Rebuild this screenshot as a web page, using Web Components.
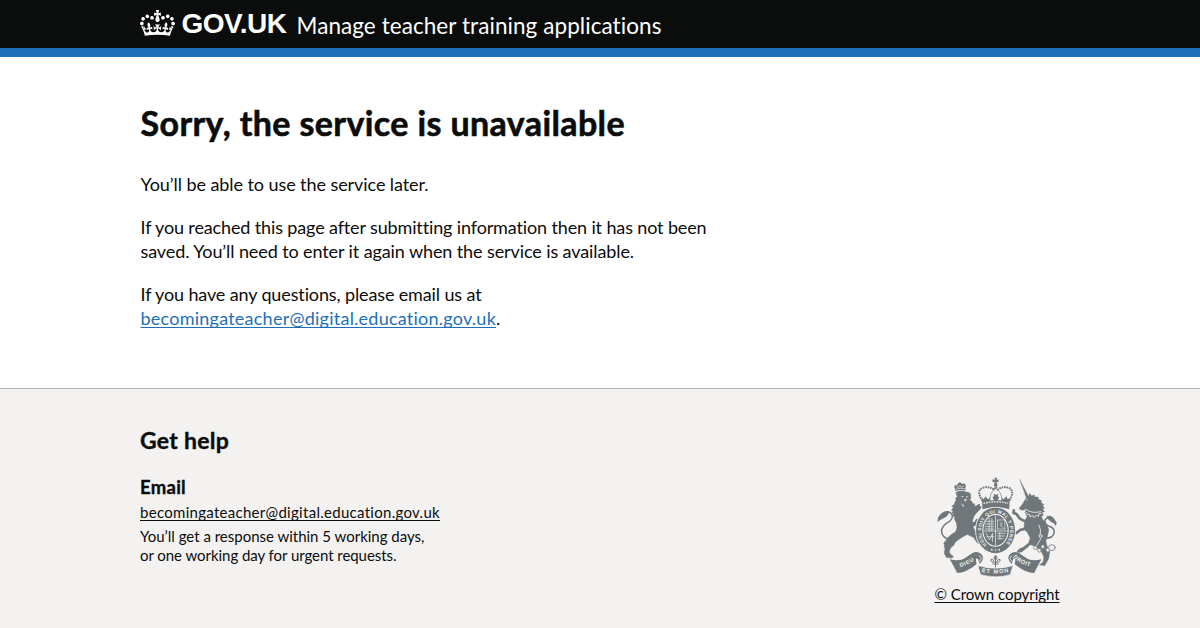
<!DOCTYPE html>
<html lang="en">
<head>
<meta charset="utf-8">
<title>Sorry, the service is unavailable</title>
<style>body{margin:0;background:#fff}</style>
</head>
<body>
<service-page></service-page>
<script>
const define = (name, html, ready) => customElements.define(name, class extends HTMLElement {
  connectedCallback() {
    if (this.shadowRoot) return;
    const t = document.createElement('template');
    t.innerHTML = html;
    this.attachShadow({ mode: 'open' }).append(t.content.cloneNode(true));
    if (ready) ready(this);
  }
});

/* One unbroken line of text, tracked so that it fills the measure given in "width". */
define('text-line', `<style>
:host{display:block;white-space:nowrap;width:max-content;font-variant-ligatures:none}
</style><slot></slot>`, el => {
  const want = parseFloat(el.getAttribute('width'));
  const n = el.textContent.trim().length;
  el.style.letterSpacing = ((want - el.getBoundingClientRect().width) / n).toFixed(4) + 'px';
});

define('crown-logo', `<style>:host{display:block;width:35px;height:26px}svg{display:block}</style>
<svg width="35" height="26" viewBox="0 0 132 97" preserveAspectRatio="none" fill="#fff"><path d="M25 30.2c3.5 1.5 7.7-.2 9.1-3.7 1.5-3.6-.2-7.8-3.9-9.2-3.6-1.4-7.6.3-9.1 3.9-1.4 3.5.3 7.5 3.9 9zM9 39.5c3.6 1.5 7.8-.2 9.2-3.7 1.5-3.6-.2-7.8-3.9-9.1-3.6-1.5-7.6.2-9.1 3.8-1.4 3.5.3 7.5 3.8 9zM4.4 57.2c3.5 1.5 7.7-.2 9.1-3.8 1.5-3.6-.2-7.7-3.9-9.1-3.5-1.5-7.6.3-9.1 3.8-1.4 3.5.3 7.6 3.9 9.1zm38.3-21.4c3.5 1.5 7.7-.2 9.1-3.8 1.5-3.6-.2-7.7-3.9-9.1-3.6-1.5-7.6.3-9.1 3.8-1.3 3.6.4 7.7 3.9 9.1zm64.4-5.6c-3.6 1.5-7.8-.2-9.1-3.7-1.5-3.6.2-7.8 3.8-9.2 3.6-1.4 7.7.3 9.2 3.9 1.3 3.5-.4 7.5-3.9 9zm15.9 9.3c-3.6 1.5-7.7-.2-9.1-3.7-1.5-3.6.2-7.8 3.7-9.1 3.6-1.5 7.7.2 9.2 3.8 1.5 3.5-.3 7.5-3.8 9zm4.7 17.7c-3.6 1.5-7.8-.2-9.2-3.8-1.5-3.6.2-7.7 3.9-9.1 3.6-1.5 7.7.3 9.2 3.8 1.3 3.5-.4 7.6-3.9 9.1zM89.3 35.8c-3.6 1.5-7.8-.2-9.2-3.8-1.4-3.6.2-7.7 3.9-9.1 3.6-1.5 7.7.3 9.2 3.8 1.4 3.6-.3 7.7-3.9 9.1zM69.7 17.7l8.9 4.7V9.3l-8.9 2.8c-.2-.3-.5-.6-.9-.9L72.4 0H59.6l3.5 11.2c-.3.3-.6.5-.9.9l-8.8-2.8v13.1l8.8-4.7c.3.3.6.7.9.9l-5 15.4v.1c-.2.8-.4 1.6-.4 2.4 0 4.1 3.1 7.5 7 8.1h.2c.3 0 .7.1 1 .1.4 0 .7 0 1-.1h.2c4-.6 7.1-4.1 7.1-8.1 0-.8-.1-1.7-.4-2.4V34l-5.1-15.4c.4-.2.7-.6 1-.9zM66 92.8c16.9 0 32.8 1.1 47.1 3.2 4-16.9 8.9-26.7 14-33.5l-9.6-3.4c1 4.9 1.1 7.2 0 10.2-1.5-1.4-3-4.3-4.2-8.7L108.6 76c2.8-2 5-3.2 7.5-3.3-4.4 9.4-10 11.9-13.6 11.2-4.3-.8-6.3-4.6-5.6-7.9 1-4.7 5.7-5.9 8-.5 4.3-8.7-3-11.4-7.6-8.8 7.1-7.2 7.9-13.5 2.1-21.1-8 6.1-8.1 12.3-4.5 20.8-4.7-5.4-12.1-2.5-9.5 6.2 3.4-5.2 7.9-2 7.2 3.1-.6 4.3-6.4 7.8-13.5 7.2-10.3-.9-10.9-8-11.2-13.8 2.5-.5 7.1 1.8 11 7.3L80.2 60c-4.1 4.4-8 5.3-12.3 5.4 1.4-4.4 8-11.6 8-11.6H55.5s6.4 7.2 7.9 11.6c-4.2-.1-8-1-12.3-5.4l1.4 16.4c3.9-5.5 8.5-7.7 10.9-7.3-.3 5.8-.9 12.8-11.1 13.8-7.2.6-12.9-2.9-13.5-7.2-.7-5 3.8-8.3 7.1-3.1 2.7-8.7-4.6-11.6-9.4-6.2 3.7-8.5 3.6-14.7-4.6-20.8-5.8 7.6-5 13.9 2.2 21.1-4.7-2.6-11.9.1-7.7 8.8 2.3-5.5 7.1-4.2 8.1.5.7 3.3-1.3 7.1-5.7 7.9-3.5.7-9-1.8-13.5-11.2 2.5.1 4.7 1.3 7.5 3.3l-4.7-15.4c-1.2 4.4-2.7 7.2-4.3 8.7-1.1-3-.9-5.3 0-10.2l-9.5 3.4c5 6.9 9.9 16.7 14 33.5 14.8-2.1 30.8-3.2 47.7-3.2z"/></svg>`);

define('royal-arms', `<style>:host{display:block;width:125px;height:102px}svg{display:block;overflow:visible}text{font:700 17px "Liberation Sans",sans-serif;fill:#f3f2f1}</style>
<svg width="125" height="102" viewBox="28.5 21 375 306" fill="#6f777b" stroke-linecap="round" stroke-linejoin="round">
<defs><path id="motto" d="M184 225A43.500 53.500 0 1 1 237 225"/><path id="l" d="M104 291Q132 285 156 262"/><path id="m" d="M168 306Q210 315 256 305"/><path id="r" d="M263 262Q284 284 326 292"/></defs>
<!-- lion -->
<path d="M91 63l-5-13 4-6 4 3 4-8 6-2 6 5 6-2 5 6-2 16q-14-4-28 1z"/>
<path d="M93 57q11-4 24-1M94 49l4 4 5-7 5 6 6-4" fill="none" stroke="#f3f2f1" stroke-width="2"/>
<path d="M92 67q14-7 28-1l11 2 5 6-2 5 3 5-5 4 8 8 2 7 5-2 0 8 7-1-1 7 6 1-4 10-9 11q-6 11-6 22 1 14 8 22 11 9 14 22l8 10-1 10-13-4-12-17-19-9q-16 8-29 18-11 7-10 13l-9 8q-10 12-3 20l10 8-6 4-15-2-6-11 2-22-4-9 15-20q10-9 20-14 8-12 3-27-8-10-5-22l-6 2 3-9-6 0 5-9-6 0 6-9-5-4 7-4q3-5 3-10l4-3-3-6 5-4z" stroke="#6f777b" stroke-width="2"/>
<path d="M107 79l8-1-4 4zM122 79l7 1-6 3zM116 87l8 1-5 8zM107 100l9 7-3 3z" fill="#f3f2f1"/>
<path d="M135 122l13-6 7-12 8-3 0 7 6 2-6 10-12 10-14 7zM130 160l17-5 5-9 8 2-2 12-9 8-17 5z"/>
<path d="M75 209q-27-6-27-27 3-15 18-24 17-9 14-23-4-10-16-10" fill="none" stroke="#6f777b" stroke-width="4.500"/>
<path d="M36 156q-1-16 13-27 12-9 22-4-3 13-14 18-13 6-21 13zM62 230l-8 3 3-7z"/>
<!-- unicorn -->
<path d="M283 29l27 52-7 3z" stroke="#6f777b"/>
<path d="M302 84l8-7 2-7 6 7 9-2 0 5 12 2-1 5 11 5-3 5 10 7-5 3 7 8-7 1 6 9-7 2 4 9-6 1q0 9 9 17 8 10 13 25l-4 20-5 13 3 14 9 20-3 19-12 22-16-2 11-10 2-14-8-17-13-13-19-7-8 7-17 14-10 3-6-4 8-8 12-5 15-12 5-14-8-17-10-10 0-15 3-14 6-9-4-8-2-4 2-10-10 3-9-3 0-5 9-11z" stroke="#6f777b"/>
<path d="M302 89l6-1-4 4z" fill="#f3f2f1"/>
<path d="M301 118q17 14 45 7M302 127l4 7 6-1 2 8 7-5 5 7 5-7 8 3 1-8 7-1" fill="none" stroke="#f3f2f1" stroke-width="2.500"/>
<path d="M304 157l-22-12-9-13-9-3 1-8M300 176l-16 4-11 9-8-2" fill="none" stroke="#6f777b" stroke-width="8"/>
<path d="M350 205q34 2 36-18 1-13-15-18-16-7-12-20 7-9 19-2 12 8 12 17" fill="none" stroke="#6f777b" stroke-width="4.500"/>
<path d="M362 140q15-8 25 8 6 9 7 14-21-4-32-22z"/>
<path d="M340 165q9 16 4 30M346 206l-12 20" fill="none" stroke="#f3f2f1" stroke-width="2.500"/><circle cx="345" cy="198" r="4.500" fill="none" stroke="#f3f2f1" stroke-width="2.500"/>
<g fill="#f3f2f1" stroke="#6f777b" stroke-width="2.400"><circle cx="330" cy="233" r="5.500"/><circle cx="342" cy="241" r="5.500"/><circle cx="352" cy="230" r="5.500"/><circle cx="367" cy="240" r="6"/><ellipse cx="379" cy="233" rx="10" ry="9"/></g>
<!-- crown -->
<path d="M207 23h8l-2 7 6-2v9l-6-2 3 12q-6 6-11 0l3-12-7 2v-9l7 2z"/>
<g fill="none" stroke="#6f777b"><path d="M171 92q-19-28-2-37 18-9 36 4l6-8 6 8q18-13 36-4 15 11-2 37" stroke-width="6" stroke-dasharray="5 2.500" stroke-linecap="butt"/><path d="M193 90q0-21 13-31M229 90q0-21-13-31" stroke-width="2"/></g>
<path d="M171 118l-2-35 6 5 5-9 7 9 7-5-2 8h13l-4-9 5-4-3-7 8 3 8-3-3 7 5 4-4 9h13l-2-8 7 5 7-9 5 9 6-5-2 35q-37-12-80 0z"/>
<path d="M174 100q37-9 74 0" fill="none" stroke="#f3f2f1" stroke-width="4" stroke-dasharray="5 3" stroke-linecap="butt"/>
<!-- garter and shield -->
<ellipse cx="210" cy="181" rx="61" ry="71" fill="#f3f2f1"/>
<ellipse cx="210" cy="181" rx="49" ry="59" fill="none" stroke="#6f777b" stroke-width="19"/>
<ellipse cx="210" cy="181" rx="36.500" ry="46"/>
<g fill="none" stroke="#f3f2f1" stroke-width="2"><path d="M210 137v88M175 183h70M182 154h23M179 162h26M179 170h26M179 177h26"/><path d="M216 150v27M238 152v25M216 150h22M216 177h22M223 157l8 4-8 5 9 5M191 145v38M199 145v38" stroke-width="1.800"/><path d="M182 190l10 20 9-20 0 24M184 200h20M216 190h23M216 198h21M216 206h17M223 187v20"/></g>
<text style="font-size:14px" textLength="240"><textPath href="#motto">HONI SOIT QUI MAL Y PENSE</textPath></text>
<g fill="#f3f2f1"><circle cx="199" cy="239" r="2.500"/><circle cx="210" cy="240" r="2.500"/><circle cx="221" cy="239" r="2.500"/></g>
<!-- ribbon and floral badge -->
<path d="M73 268q25 7 42-2 13-8 26-17 14-7 26 3 9 9 3 20l-7 10-4-8q2-10-8-8l2 17q-32 26-58 26-9-18-22-41zM348 268q-25 7-42-2-13-8-26-17-14-7-26 3-9 9-3 20l7 10 4-8q-2-10 8-8l-2 17q32 26 58 26 9-18 22-41z"/>
<path d="M158 287q52 16 104 0l-8 27q-44 12-88 0z" stroke="#f3f2f1" stroke-width="1.500"/>
<path d="M162 257l6 8-6 10M259 257l-6 8 6 10" fill="none" stroke="#f3f2f1" stroke-width="2.500"/>
<path d="M210 291v-33M208 276q-12 4-12-7 5-5 10 5M212 276q12 4 12-7-5-5-10 5M210 256q-9 9 0 15 9-6 0-15M202 282h16" fill="none" stroke="#6f777b" stroke-width="3"/>
<text textLength="47"><textPath href="#l">DIEU</textPath></text>
<text textLength="82"><textPath href="#m">ET MON</textPath></text>
<text textLength="58"><textPath href="#r">DROIT</textPath></text>
</svg>`);

define('page-width', `<style>:host{display:block;width:920px;margin:0 auto}</style><slot></slot>`);

define('service-header', `<style>
:host{display:block;height:48px;background:#0b0c0c;border-bottom:9px solid #1d70b8;color:#fff}
div{display:flex;align-items:flex-start;padding-top:10px}
.gov{font:700 28px/28px "Liberation Sans",Arial,sans-serif;margin-left:6.5px}
.name{font-size:22.5px;line-height:28px;margin:2px 0 0 10px}
</style><page-width><div><crown-logo></crown-logo><text-line class="gov" width="105">GOV.UK</text-line><text-line class="name" width="365">Manage teacher training applications</text-line></div></page-width>`);

define('service-main', `<style>
:host{display:block;height:331px}
section{padding:46px 0 0 .5px;font-size:18px;line-height:24px}
h1{font-size:34px;line-height:40px;margin:0 0 29px;font-weight:700;-webkit-text-stroke:.6px}
p{margin:0 0 19px}
a{color:#1d70b8;text-decoration:underline;text-decoration-thickness:1px;text-underline-offset:2px;text-decoration-skip-ink:none}
</style><page-width><section>
<h1><text-line width="484.5">Sorry, the service is unavailable</text-line></h1>
<p><text-line width="288">You’ll be able to use the service later.</text-line></p>
<p><text-line width="566">If you reached this page after submitting information then it has not been</text-line><text-line width="493.5">saved. You’ll need to enter it again when the service is available.</text-line></p>
<p><text-line width="341">If you have any questions, please email us at</text-line><text-line width="360"><a href="#">becomingateacher@digital.education.gov.uk</a>.</text-line></p>
</section></page-width>`);

define('service-footer', `<style>
:host{display:block;height:239px;background:#f3f2f1;border-top:1px solid #b1b4b6}
.row{display:flex;justify-content:space-between;align-items:flex-start;padding-top:36px;font-size:15px;line-height:19px}
h2,h3{-webkit-text-stroke:.35px}
h2{font-size:23px;line-height:30px;margin:0 0 20px}
h3{font-size:18.5px;line-height:25px;margin:0 0 3px}
a{color:#0b0c0c;text-decoration:underline;text-decoration-thickness:1px;text-underline-offset:2px;text-decoration-skip-ink:none}
.mail{margin-bottom:5px}
.crest{padding-top:52px}
.crest text-line{margin:6px 0 0 -.5px}
</style><page-width><div class="row"><div>
<h2><text-line width="89">Get help</text-line></h2>
<h3><text-line width="46">Email</text-line></h3>
<text-line class="mail" width="300"><a href="#">becomingateacher@digital.education.gov.uk</a></text-line>
<text-line width="284.5">You’ll get a response within 5 working days,</text-line>
<text-line width="256.5">or one working day for urgent requests.</text-line>
</div><div class="crest"><royal-arms></royal-arms><text-line width="125"><a href="#">© Crown copyright</a></text-line></div></div></page-width>`);

define('service-page', `<style>:host{display:block;color:#0b0c0c;font-family:Lato,sans-serif}</style>
<service-header></service-header><service-main></service-main><service-footer></service-footer>`);
</script>
</body>
</html>
